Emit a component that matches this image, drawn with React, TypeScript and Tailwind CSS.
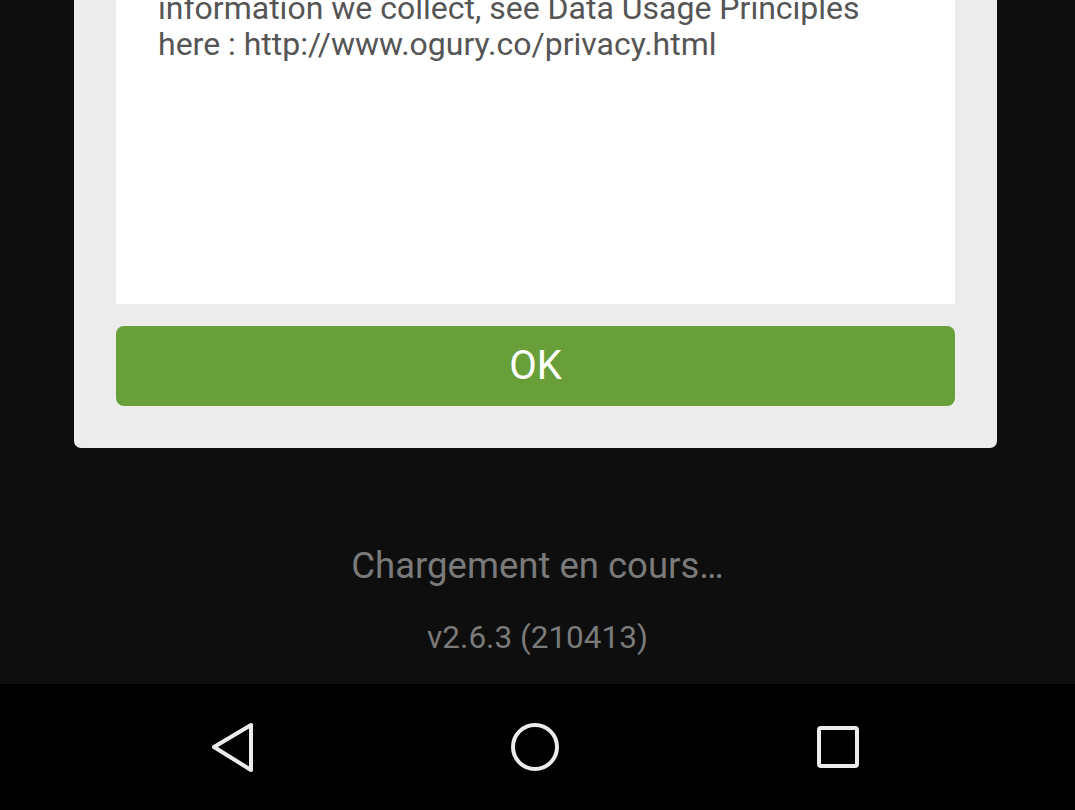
export default function App() {
  return (
    <div className="flex h-[810px] w-[1075px] flex-col overflow-hidden bg-[#0e0e0e] font-['Roboto',sans-serif]">
      <div className="flex flex-1 flex-col">
        <div className="-mt-[10px] ml-[74px] w-[923px] rounded-b-[7px] bg-[#ececec] px-[42px] pb-[42px]">
          <div className="h-[314px] bg-white px-[42px] text-[32px] leading-[36px] text-[#555555]">
            <p className="whitespace-nowrap">information we collect, see Data Usage Principles</p>
            <p className="whitespace-nowrap">here : http://www.ogury.co/privacy.html</p>
          </div>
          <button className="mt-[22px] flex h-[80px] w-full items-center justify-center rounded-[8px] bg-[#689f38] text-[40px] text-white">
            OK
          </button>
        </div>
        <div className="mt-[97px] text-center text-[36.5px] leading-[42px] text-[#7a7a7a]">Chargement en cours…</div>
        <div className="mt-[32px] text-center text-[31.5px] leading-[38px] text-[#7a7a7a]">v2.6.3 (210413)</div>
      </div>
      <div className="flex h-[126px] items-center gap-[243px] bg-black pl-[202px]">
        <svg width="60" height="60" viewBox="0 0 60 60" fill="none" stroke="#ececec" strokeWidth="4" strokeLinejoin="round">
          <path d="M49 8 L49 53 L12 30 Z" />
        </svg>
        <svg width="60" height="60" viewBox="0 0 60 60" fill="none" stroke="#ececec" strokeWidth="4">
          <circle cx="30" cy="30" r="22" />
        </svg>
        <svg width="60" height="60" viewBox="0 0 60 60" fill="none" stroke="#ececec" strokeWidth="4" strokeLinejoin="round">
          <rect x="11" y="11" width="38" height="38" rx="2" />
        </svg>
      </div>
    </div>
  );
}
